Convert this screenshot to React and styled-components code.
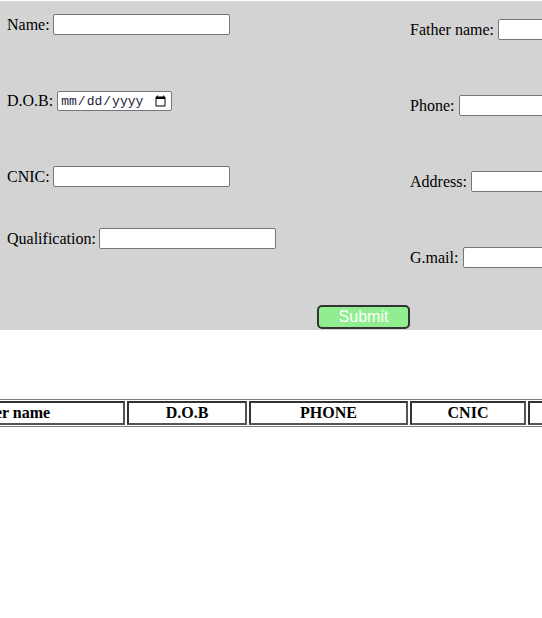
import React from "react";
import styled, { createGlobalStyle } from "styled-components";

const Global = createGlobalStyle`
  html { overflow-x: hidden; }
  body {
    margin: 0;
    padding-top: 1px;
    background: #ffffff;
    font-family: "Liberation Serif", "Times New Roman", serif;
    font-size: 16px;
    color: #000;
  }
`;

const Form = styled.form`
  width: 727px;
  background: #d3d3d3;
  padding: 13px 0 1px 0;
  box-sizing: border-box;
`;

const Columns = styled.div`
  display: flex;
  padding-left: 7px;
`;

const Row = styled.div`
  display: flex;
  align-items: center;
  gap: ${(p) => p.$gap || 4}px;
  margin-top: ${(p) => p.$space || 0}px;
`;

const LeftCol = styled.div`
  width: 403px;
  display: flex;
  flex-direction: column;
`;

const RightCol = styled.div`
  display: flex;
  flex-direction: column;
  gap: 55px;
  padding-top: 5px;
`;

const Label = styled.label`
  font-family: "Liberation Serif", "Times New Roman", serif;
  font-size: 16px;
  white-space: nowrap;
`;

const TextInput = styled.input`
  width: 177px;
  height: 21px;
  box-sizing: border-box;
  padding: 1px 2px;
  border: 1px solid #767676;
  border-radius: 2px;
  font-family: "Liberation Sans", Arial, sans-serif;
  font-size: 13.33px;
  background: #fff;
  flex: none;
`;

const DateInput = styled.input`
  width: 115px;
  height: 20px;
  box-sizing: border-box;
  padding: 1px 2px;
  border: 1px solid #767676;
  border-radius: 2px;
  font-family: "Liberation Mono", "DejaVu Sans Mono", monospace;
  font-size: 13px;
  color: #1b1b3a;
  background: #fff;
  flex: none;
`;

const ButtonRow = styled.div`
  display: flex;
  justify-content: center;
  margin-top: 37px;
`;

const SubmitButton = styled.button`
  width: 93px;
  height: 24px;
  box-sizing: border-box;
  background: #90ee90;
  color: #ffffff;
  border: 2px solid #333;
  border-radius: 5px;
  font-family: "Liberation Sans", Arial, sans-serif;
  font-size: 16px;
  padding: 0;
  line-height: 18px;
`;

const TableWrap = styled.div`
  display: flex;
  justify-content: center;
  margin-top: 69px;
`;

const Table = styled.table`
  flex: none;
  table-layout: fixed;
  border: 1px solid #808080;
  border-spacing: 2px 1px;
`;

const Th = styled.th`
  box-sizing: border-box;
  width: ${(p) => p.$w}px;
  border: 2px solid #333;
  border-right-color: #555;
  border-bottom-color: #555;
  padding: 0 1px;
  font-family: "Liberation Serif", "Times New Roman", serif;
  font-size: 16px;
  font-weight: bold;
  line-height: 20px;
  text-align: center;
  white-space: nowrap;
  overflow: hidden;
`;

const headers = [
  ["Name", 150],
  ["Father name", 237],
  ["D.O.B", 120],
  ["PHONE", 159],
  ["CNIC", 116],
  ["Address", 86],
  ["Qualification", 110],
  ["G.mail", 78],
];

export default function App() {
  return (
    <>
      <Global />
      <Form onSubmit={(e) => e.preventDefault()}>
        <Columns>
          <LeftCol>
            <Row $gap={3}>
              <Label>Name:</Label>
              <TextInput type="text" />
            </Row>
            <Row $gap={4} $space={56}>
              <Label>D.O.B:</Label>
              <DateInput type="date" />
            </Row>
            <Row $gap={3} $space={55}>
              <Label>CNIC:</Label>
              <TextInput type="text" />
            </Row>
            <Row $gap={3} $space={41}>
              <Label>Qualification:</Label>
              <TextInput type="text" />
            </Row>
          </LeftCol>
          <RightCol>
            <Row>
              <Label>Father name:</Label>
              <TextInput type="text" />
            </Row>
            <Row $gap={5}>
              <Label>Phone:</Label>
              <TextInput type="text" />
            </Row>
            <Row>
              <Label>Address:</Label>
              <TextInput type="text" />
            </Row>
            <Row $gap={5}>
              <Label>G.mail:</Label>
              <TextInput type="email" />
            </Row>
          </RightCol>
        </Columns>
        <ButtonRow>
          <SubmitButton type="submit">Submit</SubmitButton>
        </ButtonRow>
      </Form>
      <TableWrap>
        <Table>
          <thead>
            <tr>
              {headers.map(([t, w]) => (
                <Th key={t} $w={w}>
                  {t}
                </Th>
              ))}
            </tr>
          </thead>
        </Table>
      </TableWrap>
    </>
  );
}
